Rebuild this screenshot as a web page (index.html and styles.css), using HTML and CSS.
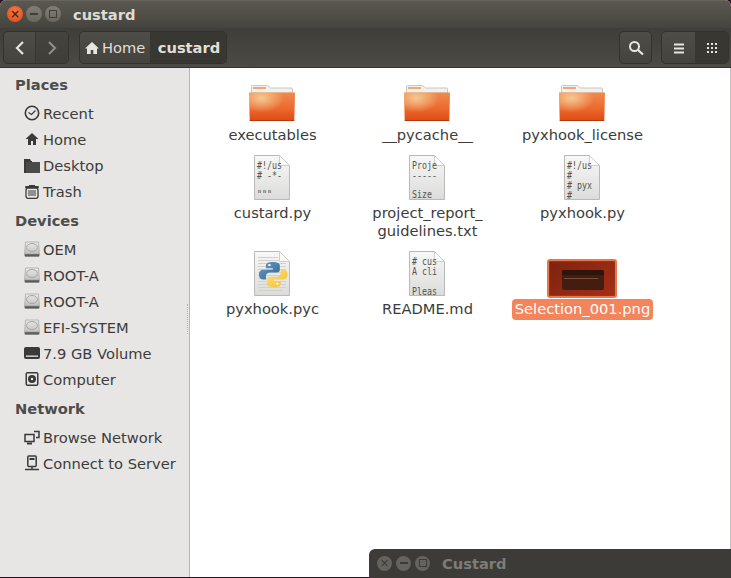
FILE: index.html
```html
<!DOCTYPE html>
<html lang="en">
<head>
<meta charset="utf-8">
<title>custard</title>
<link rel="stylesheet" href="styles.css">
</head>
<body>
<svg class="defs" width="0" height="0" aria-hidden="true">
  <defs>
    <linearGradient id="fold" x1="0" y1="0" x2="0" y2="1">
      <stop offset="0" stop-color="#ef8a4e"/><stop offset=".55" stop-color="#ec6a2f"/><stop offset="1" stop-color="#dd4a12"/>
    </linearGradient>
    <radialGradient id="foldglow" cx=".27" cy=".2" r=".5">
      <stop offset="0" stop-color="#f6d09a" stop-opacity=".9"/><stop offset="1" stop-color="#f6d09a" stop-opacity="0"/>
    </radialGradient>
    <linearGradient id="page" x1="0" y1="0" x2="0" y2="1">
      <stop offset="0" stop-color="#f7f7f6"/><stop offset="1" stop-color="#dcdcda"/>
    </linearGradient>
    <linearGradient id="drive" x1="0" y1="0" x2="0" y2="1">
      <stop offset="0" stop-color="#e8e8e6"/><stop offset=".75" stop-color="#c4c4c2"/><stop offset="1" stop-color="#6a6a68"/>
    </linearGradient>
    <linearGradient id="pyb" x1="0" y1="0" x2="1" y2="1">
      <stop offset="0" stop-color="#6a9fc8"/><stop offset="1" stop-color="#2f6494"/>
    </linearGradient>
    <linearGradient id="pyy" x1="0" y1="0" x2="1" y2="1">
      <stop offset="0" stop-color="#ffe27a"/><stop offset="1" stop-color="#f3bd30"/>
    </linearGradient>
    <symbol id="folder" viewBox="0 0 48 48">
      <path d="M3.500 19V12.500q0-1 1-1h15l3 2.500h21q1 0 1 1V19z" fill="#f2f1ee" stroke="#c9c7c2"/>
      <rect x="5" y="13" width="13" height="2" fill="#f0a878"/>
      <path d="M1 18.500h46l-.7 27.500q0 1-1.300 1H3q-1.300 0-1.300-1z" fill="url(#fold)"/>
      <path d="M1 18.500h46l-.7 27.500q0 1-1.300 1H3q-1.300 0-1.300-1z" fill="url(#foldglow)"/>
      <path d="M1.700 46.500h44.600" stroke="#b8390d" fill="none"/>
    </symbol>
    <symbol id="sheet" viewBox="0 0 48 48">
      <path d="M6.500 3.500h25l10 10v34h-35z" fill="url(#page)" stroke="#b9b9b7"/>
      <path d="M31.500 3.500v10h10z" fill="#fbfbfa" stroke="#cfcfcd"/>
    </symbol>
    <symbol id="disk" viewBox="0 0 16 16">
      <path d="M1.500 1h13l1 13q0 1.500-1.500 1.500H2Q.5 15.500.5 14z" fill="url(#drive)" stroke="#9b9b99" stroke-width=".6"/>
      <ellipse cx="8" cy="6.500" rx="5.500" ry="4" fill="none" stroke="#a8a8a6"/>
      <rect x="1" y="13.300" width="14" height="2" fill="#5c5c5a"/>
    </symbol>
  </defs>
</svg>

<div class="window">
  <header class="titlebar">
    <div class="controls">
      <span class="ctl ctl-close">×</span>
      <span class="ctl ctl-min"><i class="dash"></i></span>
      <span class="ctl ctl-max"><i class="square"></i></span>
    </div>
    <span class="title">custard</span>
  </header>

  <div class="toolbar">
    <div class="btn-group nav">
      <span class="tbtn tbtn-back"><svg width="14" height="16" viewBox="0 0 14 16"><path d="M10 2 4 8l6 6" fill="none" stroke="#e8e6e1" stroke-width="2.200"/></svg></span>
      <span class="tbtn tbtn-fwd"><svg width="14" height="16" viewBox="0 0 14 16"><path d="m4 2 6 6-6 6" fill="none" stroke="#8f8d87" stroke-width="2.200"/></svg></span>
    </div>
    <div class="btn-group crumbs">
      <span class="crumb crumb-home"><svg width="16" height="16" viewBox="0 0 16 16"><path d="M8 2 1 8.500h2V14h3.700v-4h2.600v4H13V8.500h2z" fill="#e8e6e1"/></svg>Home</span>
      <span class="crumb crumb-current">custard</span>
    </div>
    <div class="spacer"></div>
    <span class="btn-group tbtn tbtn-search"><svg width="16" height="16" viewBox="0 0 16 16"><circle cx="6.500" cy="6.500" r="4.500" fill="none" stroke="#e8e6e1" stroke-width="2"/><path d="m10 10 5 4.500" stroke="#e8e6e1" stroke-width="2.200"/></svg></span>
    <div class="btn-group views">
      <span class="tbtn tbtn-list"><svg width="12" height="12" viewBox="0 0 12 12"><path d="M1 1.500h10v2H1zm0 4h10v2H1zm0 4h10v2H1z" fill="#e8e6e1"/></svg></span>
      <span class="tbtn tbtn-grid"><svg width="12" height="12" viewBox="0 0 12 12"><path d="M1 1h2v2H1zm4 0h2v2H5zm4 0h2v2H9zM1 5h2v2H1zm4 0h2v2H5zm4 0h2v2H9zM1 9h2v2H1zm4 0h2v2H5zm4 0h2v2H9z" fill="#e8e6e1"/></svg></span>
    </div>
  </div>

  <div class="body">
    <nav class="sidebar">
      <h2 class="side-head side-head-first">Places</h2>
      <div class="side-row"><svg class="side-icon" viewBox="0 0 16 16"><circle cx="8" cy="8" r="6.700" fill="none" stroke="#3a3a3a" stroke-width="1.600"/><path d="M4.500 7.500 7.500 9.500 11.500 5.500" fill="none" stroke="#3a3a3a" stroke-width="1.200"/></svg>Recent</div>
      <div class="side-row"><svg class="side-icon" viewBox="0 0 16 16"><path d="M8 2 1.500 8H4v6h3v-4h2v4h3V8h2.500z" fill="#3a3a3a"/></svg>Home</div>
      <div class="side-row"><svg class="side-icon" viewBox="0 0 16 16"><path d="M0 2h6l1 2H8v1H2v11H0z" fill="#3a3a3a"/><rect x="2" y="5" width="14" height="11" fill="#4a4a4a"/></svg>Desktop</div>
      <div class="side-row"><svg class="side-icon" viewBox="0 0 16 16"><path d="M5 2.500h6M1.500 3.500h13v1h-13z" fill="none" stroke="#3a3a3a"/><rect x="2" y="5" width="12" height="10.300" rx="2" fill="none" stroke="#3a3a3a" stroke-width="1.300"/><path d="M5 7v6M7 7v6M9 7v6M11 7v6" stroke="#3a3a3a"/></svg>Trash</div>
      <h2 class="side-head">Devices</h2>
      <div class="side-row"><svg class="side-icon"><use href="#disk"/></svg>OEM</div>
      <div class="side-row"><svg class="side-icon"><use href="#disk"/></svg>ROOT-A</div>
      <div class="side-row"><svg class="side-icon"><use href="#disk"/></svg>ROOT-A</div>
      <div class="side-row"><svg class="side-icon"><use href="#disk"/></svg>EFI-SYSTEM</div>
      <div class="side-row"><svg class="side-icon" viewBox="0 0 16 16"><rect y="2" width="16" height="12" rx="2" fill="#3a3a3a"/><rect x="2" y="10.500" width="12" height="1.300" fill="#e7e6e4"/></svg>7.9 GB Volume</div>
      <div class="side-row"><svg class="side-icon" viewBox="0 0 16 16"><rect x="1.500" y="1" width="13" height="14" rx="2" fill="#3a3a3a"/><rect x="3" y="2.500" width="10" height="11" fill="#e7e6e4"/><circle cx="8" cy="8" r="4" fill="#3a3a3a"/><circle cx="8" cy="8" r="1.200" fill="#e7e6e4"/></svg>Computer</div>
      <h2 class="side-head">Network</h2>
      <div class="side-row"><svg class="side-icon" viewBox="0 0 16 16"><rect x="1" y="5.500" width="9" height="7" fill="#e7e6e4" stroke="#3a3a3a" stroke-width="1.500"/><path d="M10 2.500h5v6h-3" fill="none" stroke="#3a3a3a" stroke-width="1.500"/><path d="M3 14.500h5" stroke="#3a3a3a" stroke-width="2"/></svg>Browse Network</div>
      <div class="side-row"><svg class="side-icon" viewBox="0 0 16 16"><rect x="3.800" y="1" width="8.400" height="10.500" rx="1" fill="none" stroke="#3a3a3a" stroke-width="1.500"/><rect x="5.500" y="3" width="5" height="2" fill="#3a3a3a"/><path d="M8 11.500v2.500M1 14.500h14" stroke="#3a3a3a" stroke-width="1.500"/></svg>Connect to Server</div>
    </nav>

    <main class="files">
      <div class="file">
        <div class="icon"><svg class="glyph"><use href="#folder"/></svg></div>
        <div class="label">executables</div>
      </div>
      <div class="file">
        <div class="icon"><svg class="glyph"><use href="#folder"/></svg></div>
        <div class="label">__pycache__</div>
      </div>
      <div class="file">
        <div class="icon"><svg class="glyph"><use href="#folder"/></svg></div>
        <div class="label">pyxhook_license</div>
      </div>
      <div class="file">
        <div class="icon"><svg class="glyph" viewBox="0 0 48 48"><use href="#sheet" width="48" height="48"/><text class="code" x="9" y="17" textLength="25" lengthAdjust="spacingAndGlyphs">#!/us</text><text class="code" x="9" y="27" textLength="25" lengthAdjust="spacingAndGlyphs"># -*-</text><text class="code" x="9" y="46" textLength="15" lengthAdjust="spacingAndGlyphs">"""</text></svg></div>
        <div class="label">custard.py</div>
      </div>
      <div class="file">
        <div class="icon"><svg class="glyph" viewBox="0 0 48 48"><use href="#sheet" width="48" height="48"/><text class="code" x="9" y="17" textLength="25" lengthAdjust="spacingAndGlyphs">Proje</text><text class="code" x="9" y="27" textLength="25" lengthAdjust="spacingAndGlyphs">-----</text><text class="code" x="9" y="46" textLength="20" lengthAdjust="spacingAndGlyphs">Size</text></svg></div>
        <div class="label">project_report_<br>guidelines.txt</div>
      </div>
      <div class="file">
        <div class="icon"><svg class="glyph" viewBox="0 0 48 48"><use href="#sheet" width="48" height="48"/><text class="code" x="9" y="17" textLength="25" lengthAdjust="spacingAndGlyphs">#!/us</text><text class="code" x="9" y="27" textLength="5" lengthAdjust="spacingAndGlyphs">#</text><text class="code" x="9" y="37" textLength="25" lengthAdjust="spacingAndGlyphs"># pyx</text><text class="code" x="9" y="47" textLength="5" lengthAdjust="spacingAndGlyphs">#</text></svg></div>
        <div class="label">pyxhook.py</div>
      </div>
      <div class="file">
        <div class="icon"><svg class="glyph" viewBox="0 0 48 48"><use href="#sheet" width="48" height="48"/>
          <path d="M10 9.500h20M10 12.500h22M10 15.500h28M10 18.500h28M10 21.500h28M10 24.500h28M10 27.500h28M10 30.500h28M10 33.500h28M10 36.500h28M10 39.500h28M10 42.500h24" stroke="#d0d0ce"/>
          <g transform="translate(4 7) scale(.87 .7)">
            <path d="M24 10c-6 0-8 2-8 5v4h8v2H13c-3 0-5 2-5 7s2 7 5 7h3v-5c0-3 2-5 5-5h7c3 0 4-2 4-4v-6c0-3-3-5-8-5z" fill="url(#pyb)"/>
            <circle cx="20" cy="14.500" r="1.500" fill="#fff"/>
            <path d="M33 21v5c0 3-2 5-5 5h-7c-3 0-4 2-4 4v6c0 3 3 5 8 5s8-2 8-5v-4h-8v-2h11c3 0 5-2 5-7s-2-7-5-7z" fill="url(#pyy)"/>
            <circle cx="29" cy="41" r="1.500" fill="#fff"/>
          </g></svg></div>
        <div class="label">pyxhook.pyc</div>
      </div>
      <div class="file">
        <div class="icon"><svg class="glyph" viewBox="0 0 48 48"><use href="#sheet" width="48" height="48"/><text class="code" x="9" y="17" textLength="25" lengthAdjust="spacingAndGlyphs"># cus</text><text class="code" x="9" y="27" textLength="25" lengthAdjust="spacingAndGlyphs">A cli</text><text class="code" x="9" y="47" textLength="25" lengthAdjust="spacingAndGlyphs">Pleas</text></svg></div>
        <div class="label">README.md</div>
      </div>
      <div class="file">
        <div class="icon">
          <div class="thumb"><div class="thumb-term"><div class="thumb-head"></div><div class="thumb-line"></div></div></div>
        </div>
        <div class="label label-selected">Selection_001.png</div>
      </div>
    </main>
  </div>
</div>

<div class="other-window">
  <div class="controls controls-off">
    <span class="ctl ctl-off">×</span>
    <span class="ctl ctl-off"><i class="dash dash-off"></i></span>
    <span class="ctl ctl-off"><i class="square square-off"></i></span>
  </div>
  <span class="other-title">Custard</span>
</div>
</body>
</html>
```

FILE: styles.css
```css
* { box-sizing: border-box; }
html, body { margin: 0; height: 100%; overflow: hidden; }
body {
  position: relative;
  background: #2c1025;
  font-family: "DejaVu Sans", sans-serif;
  font-size: 14.67px;
  color: #3c3c3c;
}
.defs { position: absolute; }
.window {
  height: 577px;
  display: flex;
  flex-direction: column;
  border-radius: 6px 6px 0 0;
  overflow: hidden;
  background: #fff;
}

.titlebar {
  flex: 0 0 28px;
  display: flex;
  align-items: center;
  padding: 0 0 1px 7px;
  background: linear-gradient(#5a5850, #45443e);
  border-top: 1px solid #66645c;
}
.controls { display: flex; gap: 3px; }
.ctl {
  width: 16px;
  height: 16px;
  border-radius: 50%;
  display: flex;
  align-items: center;
  justify-content: center;
  font-size: 12px;
  line-height: 1;
  font-style: normal;
}
.ctl-close { background: radial-gradient(circle at 50% 35%, #f47a45, #dd4814); color: #5a2410; font-weight: bold; }
.ctl-min, .ctl-max { background: linear-gradient(#807e76, #68665f); }
.dash { width: 8px; height: 2px; background: #3f3e39; }
.square { width: 8px; height: 8px; border: 1px solid #3f3e39; }
.title {
  margin-left: 12px;
  font-weight: bold;
  color: #dfdbd2;
}

.toolbar {
  flex: 0 0 40px;
  display: flex;
  align-items: center;
  padding: 0 2px 0 3px;
  background: linear-gradient(#3f3e39, #4c4a44);
  border-bottom: 1px solid #34332f;
}
.btn-group {
  display: flex;
  height: 33px;
  border: 1px solid #33322e;
  border-radius: 5px;
  overflow: hidden;
  background: linear-gradient(#4f4d47, #45433e);
}
.nav { width: 66px; }
.tbtn {
  display: flex;
  align-items: center;
  justify-content: center;
}
.tbtn-back { width: 32px; border-right: 1px solid #38372f; }
.tbtn-fwd { flex: 1; background: linear-gradient(#45433e, #3f3e39); }
.crumbs { margin-left: 10px; width: 148px; }
.crumb {
  display: flex;
  align-items: center;
  color: #e2dfd7;
}
.crumb-home { width: 70px; padding-left: 4px; gap: 2px; }
.crumb-current {
  flex: 1;
  justify-content: center;
  padding-left: 2px;
  font-weight: bold;
  background: #383732;
}
.spacer { flex: 1; }
.tbtn-search { width: 33px; }
.views { margin-left: 9px; width: 68px; }
.tbtn-list { width: 33px; }
.tbtn-grid { flex: 1; background: #383732; }

.body { flex: 1; display: flex; min-height: 0; }
.sidebar {
  position: relative;
  flex: 0 0 190px;
  padding: 6px 0 0 15px;
  background: #e7e6e4;
  border-right: 1px solid #b7b5b0;
}
.sidebar::after {
  content: "";
  position: absolute;
  right: 1px;
  top: 236px;
  height: 30px;
  border-right: 1px dotted #b7b5b0;
}
.side-head {
  margin: 0;
  height: 29px;
  padding-top: 2px;
  font-size: 14.67px;
  line-height: 23px;
  font-weight: bold;
  color: #4d4d4d;
}
.side-head-first { margin-top: -3px; }
.side-row {
  height: 26px;
  display: flex;
  align-items: center;
  padding-left: 9px;
  gap: 3px;
  white-space: nowrap;
}
.side-row:has(+ .side-head) { margin-bottom: 3px; }
.side-icon { width: 16px; height: 16px; flex: none; }

.files {
  flex: 1;
  padding: 6px 0 0 5px;
  display: grid;
  grid-template-columns: repeat(3, 155px);
  grid-auto-rows: min-content;
  align-content: start;
  border-right: 1px solid #c4c3c0;
}
.file { display: flex; flex-direction: column; align-items: center; padding-bottom: 8px; }
.icon {
  align-self: stretch;
  height: 48px;
  padding-right: 1px;
  display: flex;
  justify-content: center;
  align-items: flex-end;
}
.glyph { width: 48px; height: 48px; display: block; }
.code {
  font-family: "DejaVu Sans Mono", monospace;
  font-size: 9.600px;
  fill: #55554f;
}
.label {
  margin-top: 4px;
  line-height: 18px;
  text-align: center;
  white-space: nowrap;
}
.label-selected {
  margin-top: 3px;
  padding: 1px 3px 2px;
  background: #f4845b;
  color: #fff;
  border-radius: 4px;
}
.thumb {
  width: 70px;
  height: 39px;
  margin-bottom: -2px;
  padding: 9px 11px 6px 13px;
  background: linear-gradient(135deg, #7c2410, #a62e14);
  border: 2px solid #e9754a;
  border-radius: 3px;
  box-shadow: inset 0 0 0 1px #8f3a1e;
}
.thumb-term {
  height: 100%;
  background: #431e10;
  border-radius: 2px;
  overflow: hidden;
}
.thumb-head { height: 5px; background: #2e150b; }
.thumb-line { height: 1px; margin: 3px 6px 0 2px; background: #7a4e38; }

.other-window {
  position: absolute;
  left: 369px;
  top: 549px;
  width: 362px;
  height: 29px;
  display: flex;
  align-items: center;
  padding: 0 0 1px 8px;
  background: #3c3b37;
  border-radius: 6px 0 0 0;
}
.controls-off { gap: 4px; }
.ctl-off { width: 15px; height: 15px; background: #64635e; color: #3c3b37; }
.dash-off { background: #3c3b37; }
.square-off { border-color: #3c3b37; }
.other-title { margin-left: 12px; font-weight: bold; color: #7d7c78; }
```
